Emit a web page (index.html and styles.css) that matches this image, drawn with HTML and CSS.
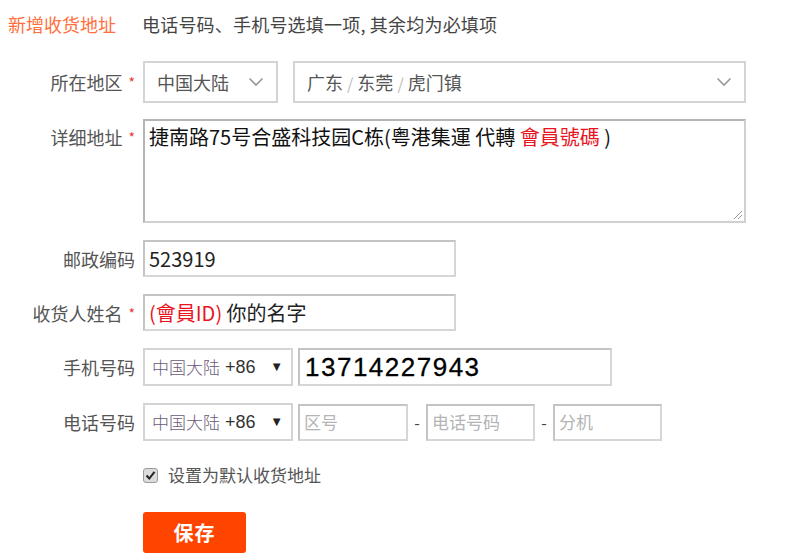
FILE: index.html
```html
<!DOCTYPE html>
<html lang="zh">
<head>
<meta charset="utf-8">
<title>新增收货地址</title>
<link rel="stylesheet" href="styles.css">
</head>
<body>
<div class="page">
  <div class="head">
    <span class="head-title">新增收货地址</span>
    <span class="head-tip">电话号码、手机号选填一项, 其余均为必填项</span>
  </div>
  <div class="form">
    <div class="row row-region">
      <div class="label">所在地区<span class="star">*</span></div>
      <div class="field">
        <div class="select sel-country">
          <span>中国大陆</span>
          <svg class="chev" width="16" height="10" viewBox="0 0 16 10"><path d="M1.5 1.5 L8 8 L14.5 1.5" fill="none" stroke="#999" stroke-width="1.6"/></svg>
        </div>
        <div class="select sel-area">
          <span>广东 <i class="sep">/</i> 东莞 <i class="sep">/</i> 虎门镇</span>
          <svg class="chev" width="16" height="10" viewBox="0 0 16 10"><path d="M1.5 1.5 L8 8 L14.5 1.5" fill="none" stroke="#999" stroke-width="1.6"/></svg>
        </div>
      </div>
    </div>
    <div class="row row-addr">
      <div class="label">详细地址<span class="star">*</span></div>
      <div class="field">
        <div class="textarea">捷南路75号合盛科技园C栋(粤港集運 代轉 <span class="red">會員號碼</span> )
          <svg class="grip" width="12" height="12" viewBox="0 0 12 12"><path d="M11 3 L3 11 M11 7 L7 11" stroke="#999" stroke-width="1"/></svg>
        </div>
      </div>
    </div>
    <div class="row row-input">
      <div class="label">邮政编码</div>
      <div class="field"><div class="input w313 big">523919</div></div>
    </div>
    <div class="row row-input">
      <div class="label">收货人姓名<span class="star">*</span></div>
      <div class="field"><div class="input w313 big"><span><span class="red">(會員ID)</span> 你的名字</span></div></div>
    </div>
    <div class="row row-input">
      <div class="label">手机号码</div>
      <div class="field">
        <div class="select sel-code"><span class="cn">中国大陆</span>&nbsp;+86<span class="tri">▼</span></div>
        <div class="input w314 phone">13714227943</div>
      </div>
    </div>
    <div class="row row-input">
      <div class="label">电话号码</div>
      <div class="field">
        <div class="select sel-code"><span class="cn">中国大陆</span>&nbsp;+86<span class="tri">▼</span></div>
        <div class="input w110 ph">区号</div>
        <span class="dash">-</span>
        <div class="input w109 ph">电话号码</div>
        <span class="dash">-</span>
        <div class="input w109 ph">分机</div>
      </div>
    </div>
    <div class="row row-check">
      <div class="label"></div>
      <div class="field">
        <span class="check"><svg width="11" height="11" viewBox="0 0 11 11"><path d="M1.5 5.5 L4.3 8.5 L9.5 1.8" fill="none" stroke="#222" stroke-width="2"/></svg></span>
        <span class="check-text">设置为默认收货地址</span>
      </div>
    </div>
    <div class="row row-btn">
      <div class="label"></div>
      <div class="field"><div class="btn">保存</div></div>
    </div>
  </div>
</div>
</body>
</html>
```

FILE: styles.css
```css
* { box-sizing: border-box; }
html, body { margin: 0; padding: 0; background: #fff; }
body {
  font-family: "Noto Sans CJK SC", "Liberation Sans", sans-serif;
  font-size: 18px;
  color: #333;
  width: 800px;
  height: 560px;
  overflow: hidden;
}
.page { padding: 0 0 0 8px; }
.head {
  display: flex;
  align-items: center;
  height: 48px;
  gap: 26px;
}
.head-title { color: #ff6f3d; font-size: 18px; line-height: 24px; }
.head-tip { color: #444; font-size: 18px; line-height: 24px; letter-spacing: 0.2px; }

.form { padding-top: 13px; }
.row {
  display: grid;
  grid-template-columns: 127px 1fr;
  column-gap: 8px;
  margin-bottom: 17px;
}
.row-region { margin-bottom: 16px; }
.label {
  text-align: right;
  color: #555;
  font-size: 18px;
  line-height: 24px;
  align-self: center;
  white-space: nowrap;
}
.star { color: #e4393c; font-size: 14px; margin-left: 6px; vertical-align: top; }
.field { display: flex; align-items: center; }
.red { color: #e8141e; }

.select {
  display: flex;
  align-items: center;
  justify-content: space-between;
  border: 2px solid #d4d4d4;
  background: #fff;
  color: #555;
  line-height: 24px;
}
.sel-country { width: 135px; height: 42px; padding: 0 12px 0 12px; }
.sel-area { width: 453px; height: 42px; margin-left: 15px; padding: 0 12px 0 12px; }
.sep { font-style: normal; color: #bbb; font-size: 16px; }
.chev { flex: none; }

.row-addr .label { align-self: start; padding-top: 6px; }
.textarea {
  position: relative;
  width: 603px;
  height: 104px;
  border: 2px solid #b5b5b5;
  border-right-color: #d0d0d0;
  border-bottom-color: #d0d0d0;
  padding: 2px 4px;
  color: #111;
  font-size: 20px;
  line-height: 28px;
}
.grip { position: absolute; right: 1px; bottom: 1px; }

.input {
  height: 37px;
  border: 2px solid #c4c4c4;
  border-right-color: #d6d6d6;
  border-bottom-color: #d6d6d6;
  padding: 0 4px;
  display: flex;
  align-items: center;
  color: #222;
  line-height: 24px;
  white-space: nowrap;
  background: #fff;
}
.big { font-size: 20px; }
.w313 { width: 313px; }
.w314 { width: 314px; margin-left: 5px; }
.w110 { width: 110px; margin-left: 5px; }
.w109 { width: 109px; }
.ph { color: #b4b4b4; font-size: 17px; }
.dash { width: 18px; text-align: center; color: #444; font-size: 16px; }
.phone {
  font-family: "Liberation Sans", sans-serif;
  font-size: 26px;
  color: #000;
  letter-spacing: 1.5px;
  padding-left: 5px;
  height: 38px;
  -webkit-text-stroke: 0.3px #000;
}
.sel-code {
  width: 150px;
  height: 38px;
  padding: 0 8px 0 7px;
  justify-content: flex-start;
  color: #333;
  font-family: "Liberation Sans", "Noto Sans CJK SC", sans-serif;
  font-size: 18px;
}
.sel-code .cn { font-family: "Noto Sans CJK SC", sans-serif; color: #6a5a78; font-weight: 300; font-size: 17px; }
.tri { margin-left: auto; font-size: 13px; color: #222; }

.row-check { margin-bottom: 25px; margin-top: 22px; }
.row-check .field { gap: 10px; }
.check {
  width: 15px; height: 15px;
  border: 1px solid #9a9a9a;
  border-radius: 3px;
  background: #dcdcdc;
  display: flex; align-items: center; justify-content: center;
}
.check-text { color: #555; font-size: 17px; line-height: 24px; }
.btn {
  width: 103px;
  height: 41px;
  background: #ff4400;
  border-radius: 3px;
  color: #fff;
  font-weight: 700;
  font-size: 20px;
  display: flex;
  align-items: center;
  justify-content: center;
  letter-spacing: 1px;
}
```
